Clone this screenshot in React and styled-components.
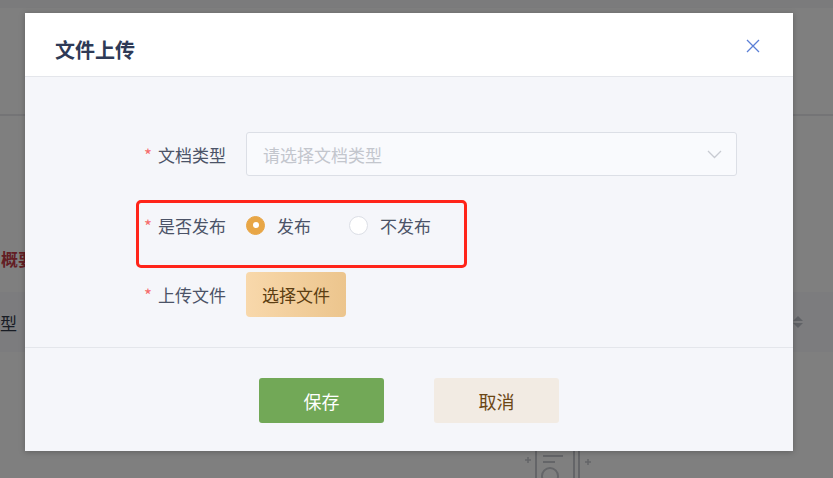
import React from "react";
import styled, { createGlobalStyle } from "styled-components";

const Global = createGlobalStyle`
  html, body { margin: 0; padding: 0; }
  body {
    font-family: "Noto Sans CJK SC", "Noto Sans", sans-serif;
    width: 833px; height: 478px; overflow: hidden;
  }
`;

const Page = styled.div`
  position: relative;
  width: 833px;
  height: 478px;
  background: #ffffff;
  overflow: hidden;
  display: flex;
  flex-direction: column;
`;

const TopStrip = styled.div`
  height: 8px;
  flex: none;
  background: #f6f7f9;
`;

const Hero = styled.div`
  height: 106px;
  flex: none;
  border-bottom: 2px solid #e8e9ed;
`;

const SectionTitle = styled.div`
  margin-top: 134px;
  height: 42px;
  flex: none;
  padding-left: 1px;
  font-size: 17px;
  font-weight: 700;
  color: #c63c48;
  line-height: 18px;
`;

const TableHead = styled.div`
  height: 60px;
  flex: none;
  background: #f8f9fc;
  display: flex;
  align-items: center;
  justify-content: space-between;
  padding: 0 30px 0 0;
  font-size: 17px;
  color: #333a4a;
`;

const HeadCell = styled.div`
  display: flex;
  align-items: center;
  gap: 8px;
`;

const SortIcon = styled.span`
  display: inline-flex;
  flex-direction: column;
  gap: 2px;
  &::before, &::after {
    content: "";
    width: 0; height: 0;
    border-left: 5px solid transparent;
    border-right: 5px solid transparent;
  }
  &::before { border-bottom: 5px solid #c0c4cc; }
  &::after { border-top: 5px solid #c0c4cc; }
`;

const BottomArt = styled.div`
  margin-top: 98px;
  padding-left: 522px;
`;

const Mask = styled.div`
  position: absolute;
  inset: 0;
  background: rgba(0, 0, 0, 0.5);
`;

const Modal = styled.div`
  position: absolute;
  left: 25px;
  top: 13px;
  width: 768px;
  height: 438px;
  background: #f5f6fa;
  box-shadow: 0 1px 6px rgba(0, 0, 0, 0.25);
  display: flex;
  flex-direction: column;
`;

const Header = styled.div`
  height: 64px;
  flex: none;
  box-sizing: border-box;
  background: #ffffff;
  border-bottom: 1px solid #e4e6eb;
  display: flex;
  align-items: flex-start;
  justify-content: space-between;
  padding: 22px 33px 0 30px;
`;

const Title = styled.div`
  font-size: 20px;
  font-weight: 700;
  line-height: 30px;
  color: #2e3a56;
`;

const Close = styled.button`
  border: 0;
  background: none;
  padding: 0;
  margin-top: 4px;
  width: 14px;
  height: 14px;
  cursor: pointer;
  display: flex;
`;

const Body = styled.div`
  height: 271px;
  flex: none;
  box-sizing: border-box;
  border-bottom: 1px solid #e4e6eb;
  padding: 55px 56px 0 101px;
  position: relative;
`;

const Row = styled.div`
  display: flex;
  align-items: center;
  height: ${(p) => p.$h}px;
  margin-bottom: ${(p) => p.$mb || 0}px;
`;

const Label = styled.label`
  width: 100px;
  flex: none;
  text-align: right;
  padding-right: 20px;
  font-size: 17px;
  color: #4b5367;
  white-space: nowrap;
  &::before {
    content: "*";
    color: #f56c6c;
    margin-right: 6px;
  }
`;

const Select = styled.div`
  flex: 1;
  height: 44px;
  box-sizing: border-box;
  border: 1px solid #dcdfe6;
  border-radius: 3px;
  background: #f9fafd;
  display: flex;
  align-items: center;
  justify-content: space-between;
  padding: 0 14px 0 16px;
  font-size: 17px;
  color: #c3c6cd;
`;

const RadioGroup = styled.div`
  display: flex;
  align-items: center;
`;

const RadioItem = styled.label`
  display: flex;
  align-items: center;
  gap: 12px;
  font-size: 17px;
  color: #4b5367;
  margin-right: ${(p) => p.$mr || 0}px;
`;

const RadioDot = styled.span`
  width: 19px;
  height: 19px;
  box-sizing: border-box;
  border-radius: 50%;
  border: 1px solid ${(p) => (p.$on ? "#e8a646" : "#dcdfe6")};
  background: ${(p) => (p.$on ? "#e8a646" : "#ffffff")};
  display: flex;
  align-items: center;
  justify-content: center;
  &::after {
    content: "";
    width: 6px;
    height: 6px;
    border-radius: 50%;
    background: #ffffff;
    display: ${(p) => (p.$on ? "block" : "none")};
  }
`;

const FileButton = styled.button`
  width: 100px;
  height: 45px;
  border: 0;
  border-radius: 4px;
  background: linear-gradient(90deg, #f8d8ab, #ecc58d);
  font-family: inherit;
  font-size: 17px;
  color: #5c3e12;
  padding: 0;
`;

const Highlight = styled.div`
  position: absolute;
  left: 111px;
  top: 123px;
  width: 331px;
  height: 68px;
  box-sizing: border-box;
  border: 3px solid #ff2419;
  border-radius: 5px;
`;

const Footer = styled.div`
  flex: 1;
  display: flex;
  justify-content: center;
  align-items: flex-start;
  padding-top: 30px;
  gap: 50px;
`;

const FootButton = styled.button`
  width: 125px;
  height: 45px;
  border: 0;
  border-radius: 3px;
  font-family: inherit;
  font-size: 18px;
  background: ${(p) => (p.$primary ? "#72a857" : "#f2ebe3")};
  color: ${(p) => (p.$primary ? "#ffffff" : "#6b4615")};
`;

export default function App() {
  return (
    <>
      <Global />
      <Page>
        <TopStrip />
        <Hero />
        <SectionTitle>概要</SectionTitle>
        <TableHead>
          <HeadCell>
            型<SortIcon />
          </HeadCell>
          <HeadCell>
            <SortIcon />
          </HeadCell>
        </TableHead>
        <BottomArt>
          <svg width="80" height="30" viewBox="0 0 80 30" fill="none" stroke="#c8cad0" strokeWidth="2">
            <path d="M3 10h6M6 7v6" strokeWidth="1.5" />
            <path d="M14 0v30" />
            <path d="M21 0h20M21 6h20M21 12h12" />
            <circle cx="28" cy="26" r="8" />
            <path d="M52 0v30M57 0v30" />
            <path d="M63 12h6M66 9v6" strokeWidth="1.5" />
          </svg>
        </BottomArt>
        <Mask />
        <Modal>
          <Header>
            <Title>文件上传</Title>
            <Close aria-label="close">
              <svg width="14" height="14" viewBox="0 0 14 14" stroke="#5b7fd6" strokeWidth="1.3">
                <path d="M1 1l12 12M13 1L1 13" />
              </svg>
            </Close>
          </Header>
          <Body>
            <Row $h={44} $mb={27}>
              <Label>文档类型</Label>
              <Select>
                请选择文档类型
                <svg width="15" height="9" viewBox="0 0 15 9" fill="none" stroke="#c8cbd2" strokeWidth="1.3">
                  <path d="M1 1l6.5 6.5L14 1" />
                </svg>
              </Select>
            </Row>
            <Row $h={44} $mb={25}>
              <Label>是否发布</Label>
              <RadioGroup>
                <RadioItem $mr={38}>
                  <RadioDot $on />
                  发布
                </RadioItem>
                <RadioItem>
                  <RadioDot />
                  不发布
                </RadioItem>
              </RadioGroup>
            </Row>
            <Row $h={45}>
              <Label>上传文件</Label>
              <FileButton>选择文件</FileButton>
            </Row>
            <Highlight />
          </Body>
          <Footer>
            <FootButton $primary>保存</FootButton>
            <FootButton>取消</FootButton>
          </Footer>
        </Modal>
      </Page>
    </>
  );
}
